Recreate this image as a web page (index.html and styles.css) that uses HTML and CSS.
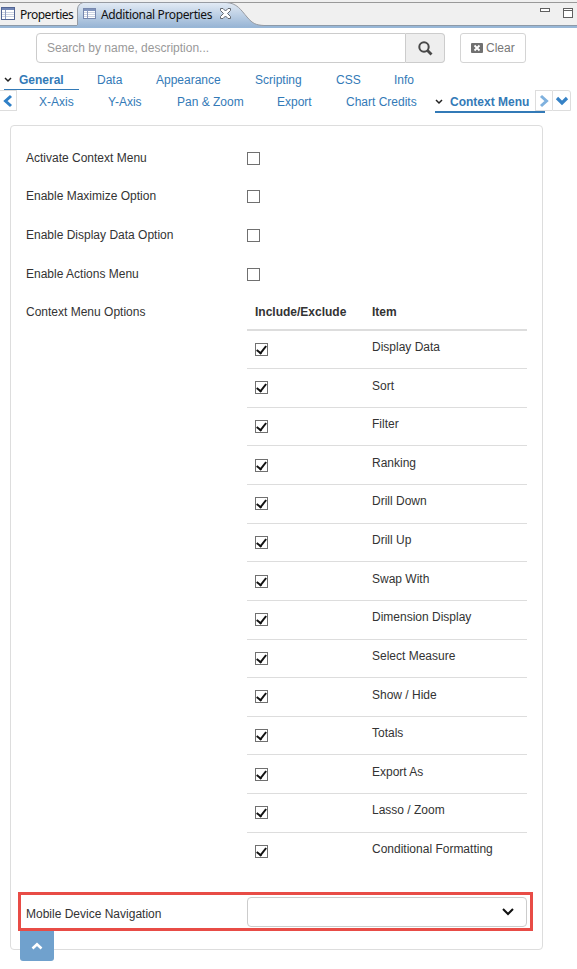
FILE: index.html
```html
<!DOCTYPE html>
<html lang="en">
<head>
<meta charset="utf-8">
<title>Additional Properties</title>
<link rel="stylesheet" href="styles.css">
</head>
<body>
<header class="tabbar">
  <div class="view-tab">
    <svg class="grid-icon" width="15" height="13" viewBox="0 0 15 13"><rect x=".5" y=".5" width="13" height="12" fill="#fff" stroke="#526594"/><path d="M1 2h12" stroke="#7186b5" stroke-width="2"/><path d="M1 5.5h12M1 7.5h12M1 9.5h12" stroke="#ccd3e2"/><path d="M4.5 3v9" stroke="#8b9abf"/></svg>
    <span class="view-name">Properties</span>
  </div>
  <div class="view-tab-active">
    <svg class="tab-shape" width="187" height="25" viewBox="0 0 187 25"><defs><linearGradient id="tab" x1="0" y1="0" x2="0" y2="1"><stop offset="0" stop-color="#e3ebf5"/><stop offset="1" stop-color="#98b5d5"/></linearGradient></defs><path d="M0 25V7Q1 2 6 .5H149C160 1 164 8 170 15S179 23 187 23.500V25Z" fill="url(#tab)"/><path d="M.5 23V7Q1 2 6 .5H149C160 1 164 8 170 15S179 23 187 23.500" fill="none" stroke="#979ba2"/></svg>
    <svg class="grid-icon" width="14" height="13" viewBox="0 0 14 13"><rect x=".5" y="1.500" width="12" height="10" fill="#fff" stroke="#7788ae"/><path d="M1 3h11" stroke="#8094bd" stroke-width="2"/><path d="M1 5.500h11M1 7.500h11M1 9.500h11" stroke="#ccd3e2"/><path d="M4.500 3v8" stroke="#8b9abf"/></svg>
    <span class="view-name">Additional Properties</span>
    <svg class="close" width="11" height="11" viewBox="0 0 11 11"><path d="M.5.5H3L5.500 3 8 .5h2.500V2.500L7.500 5.500l3 3v2H8L5.500 8 3 10.500H.5v-2l3-3-3-3Z" fill="#fff" stroke="#656970"/></svg>
  </div>
  <div class="window-tools">
    <svg width="10" height="18" viewBox="0 0 10 18"><rect x=".5" y=".5" width="9" height="3" fill="#fff" stroke="#606060"/></svg>
    <svg width="10" height="18" viewBox="0 0 10 18"><rect x=".5" y=".5" width="9" height="9" fill="#fff" stroke="#606060"/><path d="M0 2.500h10" stroke="#606060"/></svg>
  </div>
</header>

<div class="search-row">
  <div class="search-box">Search by name, description...</div>
  <div class="search-btn"><svg width="15" height="15" viewBox="0 0 15 15"><circle cx="6" cy="6" r="4.700" fill="none" stroke="#484848" stroke-width="2"/><path d="M9.500 9.500 13.500 13.500" stroke="#484848" stroke-width="2.800"/></svg></div>
  <div class="clear-btn"><svg width="12" height="10" viewBox="0 0 12 10"><rect width="12" height="10" rx="1" fill="#707070"/><path d="M3.500 2.500 8.500 7.500M8.500 2.500 3.500 7.500" stroke="#fff" stroke-width="1.800"/></svg><span>Clear</span></div>
</div>

<nav class="tabs">
  <div class="tab-row top">
    <div class="tab selected general"><svg width="8" height="6" viewBox="0 0 8 6"><path d="M1 1 4 4 7 1" fill="none" stroke="#222" stroke-width="1.500"/></svg><span>General</span></div>
    <div class="tab data">Data</div><div class="tab appearance">Appearance</div><div class="tab scripting">Scripting</div><div class="tab css">CSS</div><div class="tab">Info</div>
  </div>
  <div class="tab-row second">
    <div class="arrow-box left"><svg width="11" height="14" viewBox="0 0 11 14"><path d="M9 2 3.500 7 9 12" fill="none" stroke="#2f7fc6" stroke-width="3"/></svg></div>
    <div class="tab xaxis">X-Axis</div><div class="tab yaxis">Y-Axis</div><div class="tab pan">Pan &amp; Zoom</div><div class="tab export">Export</div><div class="tab credits">Chart Credits</div>
    <div class="tab selected context"><svg width="8" height="6" viewBox="0 0 8 6"><path d="M1 1 4 4 7 1" fill="none" stroke="#222" stroke-width="1.500"/></svg><span>Context Menu</span></div>
    <div class="arrow-box next"><svg width="11" height="14" viewBox="0 0 11 14"><path d="M2 2 7.500 7 2 12" fill="none" stroke="#7fb1de" stroke-width="3"/></svg></div>
    <div class="arrow-box down"><svg width="14" height="10" viewBox="0 0 14 10"><path d="M2 2 7 7 12 2" fill="none" stroke="#3682c6" stroke-width="3.200"/></svg></div>
  </div>
</nav>

<main class="panel">
  <div class="field"><span>Activate Context Menu</span><i class="check"></i></div>
  <div class="field"><span>Enable Maximize Option</span><i class="check"></i></div>
  <div class="field"><span>Enable Display Data Option</span><i class="check"></i></div>
  <div class="field"><span>Enable Actions Menu</span><i class="check"></i></div>
  <div class="options">
    <span class="options-label">Context Menu Options</span>
    <div class="table">
      <div class="thead"><span>Include/Exclude</span><span>Item</span></div>
      <div class="trow"><i class="check on"></i><span>Display Data</span></div>
      <div class="trow"><i class="check on"></i><span>Sort</span></div>
      <div class="trow"><i class="check on"></i><span>Filter</span></div>
      <div class="trow"><i class="check on"></i><span>Ranking</span></div>
      <div class="trow"><i class="check on"></i><span>Drill Down</span></div>
      <div class="trow"><i class="check on"></i><span>Drill Up</span></div>
      <div class="trow"><i class="check on"></i><span>Swap With</span></div>
      <div class="trow"><i class="check on"></i><span>Dimension Display</span></div>
      <div class="trow"><i class="check on"></i><span>Select Measure</span></div>
      <div class="trow"><i class="check on"></i><span>Show / Hide</span></div>
      <div class="trow"><i class="check on"></i><span>Totals</span></div>
      <div class="trow"><i class="check on"></i><span>Export As</span></div>
      <div class="trow"><i class="check on"></i><span>Lasso / Zoom</span></div>
      <div class="trow"><i class="check on"></i><span>Conditional Formatting</span></div>
    </div>
  </div>
  <div class="highlight">
    <span>Mobile Device Navigation</span>
    <div class="select"><svg width="14" height="10" viewBox="0 0 14 10"><path d="M2 2 7 7 12 2" fill="none" stroke="#111" stroke-width="2"/></svg></div>
  </div>
  <div class="to-top"><svg width="12" height="8" viewBox="0 0 12 8"><path d="M1.500 6.500 6 2.300 10.500 6.500" fill="none" stroke="#fff" stroke-width="2.600"/></svg></div>
</main>
</body>
</html>
```
FILE: styles.css
```css
* { box-sizing: border-box; }
body {
  margin: 0;
  height: 969px;
  overflow: hidden;
  background: #fff;
  color: #333;
  font: 12px/18px "Liberation Sans", Arial, sans-serif;
}
svg { display: block; flex: none; }

.tabbar {
  display: flex;
  height: 28px;
  padding-top: 2px;
  background: linear-gradient(#f0f0f0 2px, #999 2px, #999 3px, #f0f0f0 3px, #f0f0f0 25px, #8d9aa8 25px, #8d9aa8 26px, #98b7d7 26px);
  color: #111;
  font: 12px/26px "Noto Sans", "Open Sans", sans-serif;
}
.view-tab { display: flex; width: 77px; padding: 0 0 0 1px; }
.view-tab .grid-icon { margin: 5px 4px 0 0; }
.view-name { white-space: nowrap; letter-spacing: -0.5px; }
.view-tab-active { position: relative; display: flex; width: 187px; height: 25px; padding-left: 6px; }
.view-tab-active > * { position: relative; }
.view-tab-active .tab-shape { position: absolute; left: 0; top: 0; }
.view-tab-active .grid-icon { margin: 5px 4px 0 0; }
.view-tab-active .view-name { width: 119px; letter-spacing: -0.37px; }
.close { margin-top: 6px; }
.window-tools { display: flex; gap: 13px; margin-left: auto; padding: 6px 4px 0 0; }

.search-row { display: flex; padding: 5px 0 0 36px; }
.search-box {
  width: 370px;
  height: 30px;
  padding: 5px 10px;
  border: 1px solid #ccc;
  border-radius: 4px 0 0 4px;
  color: #999;
}
.search-btn {
  display: flex;
  align-items: center;
  justify-content: center;
  width: 39px;
  height: 30px;
  border: 1px solid #ccc;
  border-left: 0;
  border-radius: 0 4px 4px 0;
  background: #eee;
}
.clear-btn {
  display: flex;
  align-items: center;
  gap: 3px;
  width: 66px;
  height: 30px;
  margin-left: 15px;
  padding-left: 10px;
  border: 1px solid #d4d4d4;
  border-radius: 3px;
  color: #777;
}

.tabs { padding-top: 7px; color: #337ab7; }
.tab-row { display: flex; }
.tab { flex: none; white-space: nowrap; }
.tab.selected { display: flex; gap: 7px; font-weight: bold; }
.tab.selected svg { margin-top: 6px; }
.tab-row.top { height: 20px; padding: 1px 0 0 4px; }
.general { width: 75px; height: 19px; margin-right: 18px; border-bottom: 1px solid #337ab7; }
.data { width: 59px; }
.appearance { width: 99px; }
.scripting { width: 81px; }
.css { width: 58px; }
.second { height: 23px; }
.second .tab { padding-top: 3px; }
.arrow-box {
  display: flex;
  align-items: center;
  justify-content: center;
  width: 18px;
  height: 21px;
  border: 1px solid #ddd;
}
.left { width: 17px; margin-right: 22px; border-left: 0; padding-right: 2px; }
.xaxis { width: 69px; }
.yaxis { width: 69px; }
.pan { width: 100px; }
.export { width: 69px; }
.credits { width: 89px; }
.context { width: 110px; height: 23px; margin-right: -10px; border-bottom: 2px solid #337ab7; }
.next { border-right: 0; width: 17px; }
.down { border-radius: 0 3px 0 0; width: 19px; }

.panel {
  position: relative;
  width: 533px;
  height: 825px;
  margin: 12px 0 0 10px;
  padding: 13px 15px 0;
  border: 1px solid #ddd;
  border-radius: 4px;
}
.field { display: flex; align-items: center; height: 38.6px; }
.field span { width: 221px; margin-top: -1px; }
.check { display: block; width: 13px; height: 13px; border: 1px solid #707070; background: #fff; }
.check.on::after {
  content: "";
  display: block;
  width: 8px;
  height: 4px;
  margin: 2px 0 0 1px;
  border: solid #111;
  border-width: 0 0 2px 2px;
  transform: translate(-0.5px, -0.3px) rotate(-52deg);
}
.options { display: flex; }
.options-label { width: 221px; padding-top: 10px; }
.table { width: 280px; }
.thead, .trow { display: grid; grid-template-columns: 117px 1fr; padding-left: 8px; }
.thead { height: 37.2px; padding-top: 10px; border-bottom: 2px solid #ddd; font-weight: bold; }
.trow { height: 38.64px; padding-top: 7.4px; border-bottom: 1px solid #ddd; }
.trow:last-child { border-bottom: 0; }
.trow .check { margin-top: 4.8px; }
.highlight {
  display: flex;
  width: 515px;
  height: 39px;
  margin: 20.4px 0 0 -8px;
  padding: 2px 0 0 5px;
  border: 3px solid #e84c46;
}
.highlight span { width: 221px; padding-top: 8px; }
.select {
  display: flex;
  align-items: center;
  justify-content: flex-end;
  width: 280px;
  height: 30px;
  padding-right: 11px;
  border: 1px solid #ccc;
  border-radius: 4px;
}
.to-top {
  position: absolute;
  left: 9px;
  top: 805px;
  display: flex;
  align-items: center;
  justify-content: center;
  width: 34px;
  height: 30px;
  border-radius: 0 0 3px 3px;
  background: #70a1cd;
}
```
